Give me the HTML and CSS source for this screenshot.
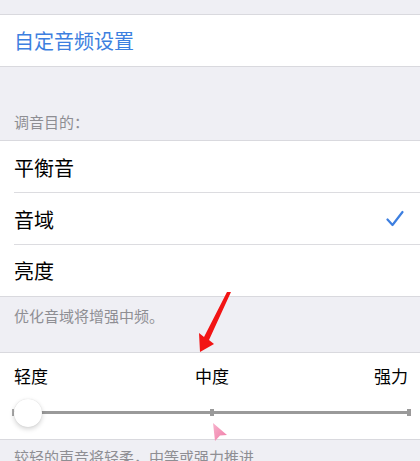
FILE: index.html
```html
<!DOCTYPE html>
<html lang="zh-CN">
<head>
<meta charset="utf-8">
<link rel="stylesheet" href="styles.css">
</head>
<body>
<div class="page">
  <div class="gap-top"></div>
  <div class="group">
    <div class="row link">自定音频设置</div>
  </div>
  <div class="header">调音目的：</div>
  <div class="group">
    <div class="row sep">平衡音</div>
    <div class="row sep checked">音域
      <svg class="check" width="18" height="18" viewBox="0 0 18 18"><path d="M1.5 9.5 L6.5 15 L16.5 2" fill="none" stroke="#3d7fe0" stroke-width="2.2" stroke-linecap="round" stroke-linejoin="round"/></svg>
    </div>
    <div class="row">亮度</div>
  </div>
  <div class="footer">优化音域将增强中频。</div>
  <div class="group slider-group">
    <div class="labels"><span>轻度</span><span>中度</span><span>强力</span></div>
    <div class="slider">
      <div class="track"></div>
      <div class="tick tick-start"></div>
      <div class="tick tick-mid"></div>
      <div class="tick tick-end"></div>
      <div class="thumb"></div>
    </div>
  </div>
  <div class="footer footer2">较轻的声音将轻柔，中等或强力推进</div>

  <svg class="red-arrow" width="44" height="70" viewBox="0 0 44 70">
    <polygon points="37,6 14,51 9,47 10,66 24,58 19,54 41,6" fill="#f21414"/>
  </svg>
  <svg class="cursor" width="20" height="22" viewBox="0 0 20 22">
    <defs><linearGradient id="pk" x1="0" y1="0" x2="1" y2="1"><stop offset="0" stop-color="#f7b3cc"/><stop offset="1" stop-color="#f07aa6"/></linearGradient></defs>
    <polygon points="3,2 17,14 10,14.5 5,20" fill="url(#pk)"/>
  </svg>
</div>
</body>
</html>
```

FILE: styles.css
```css
html, body {
  margin: 0;
  padding: 0;
}
body {
  background: #efeff4;
  font-family: "Noto Sans CJK SC", "Noto Sans", sans-serif;
  color: #000;
  overflow: hidden;
}
.page {
  position: relative;
  width: 420px;
  height: 461px;
  overflow: hidden;
}
.gap-top {
  height: 14px;
}
.group {
  background: #fff;
  border-top: 1px solid #d9d9de;
  border-bottom: 1px solid #d9d9de;
}
.row {
  height: 51px;
  display: flex;
  align-items: center;
  padding-left: 14px;
  font-size: 20px;
  position: relative;
}
.row.sep::after {
  content: "";
  position: absolute;
  left: 14px;
  right: 0;
  bottom: 0;
  height: 1px;
  background: #dcdce0;
}
.row.sep {
  height: 52px;
}
.link {
  color: #3d7fe0;
  height: 51px;
}
.checked {
  justify-content: space-between;
  padding-right: 16px;
}
.check {
  display: block;
}
.header {
  height: 73px;
  box-sizing: border-box;
  display: flex;
  align-items: flex-end;
  padding: 0 0 8px 14px;
  font-size: 15px;
  color: #8e8e93;
  line-height: 20px;
}
.footer {
  height: 55px;
  box-sizing: border-box;
  padding: 9px 0 0 14px;
  font-size: 15px;
  line-height: 20px;
  color: #8e8e93;
}
.footer2 {
  padding-top: 7px;
  height: 30px;
}
.slider-group {
  height: 88px;
  box-sizing: border-box;
}
.labels {
  display: flex;
  justify-content: space-between;
  padding: 11px 12px 0 14px;
  font-size: 17px;
  line-height: 24px;
}
.labels span:nth-child(2) {
  margin-left: 2px;
}
.slider {
  position: relative;
  height: 28px;
  margin: 11px 10px 0 14px;
}
.track {
  position: absolute;
  left: 0;
  right: 0;
  top: 12px;
  height: 3px;
  background: #9a9a9a;
}
.tick {
  position: absolute;
  top: 10px;
  width: 4px;
  height: 7px;
  background: #9a9a9a;
}
.tick-start {
  left: -2px;
  width: 2px;
  background: #aaa;
}
.tick-mid {
  left: 196px;
}
.tick-end {
  right: -1px;
}
.thumb {
  position: absolute;
  left: 0;
  top: 0;
  width: 28px;
  height: 28px;
  border-radius: 50%;
  background: #fff;
  box-shadow: 0 2px 5px rgba(0,0,0,0.18), 0 0 1px rgba(0,0,0,0.15);
}
.red-arrow {
  position: absolute;
  left: 190px;
  top: 286px;
}
.cursor {
  position: absolute;
  left: 210px;
  top: 421px;
}
```
